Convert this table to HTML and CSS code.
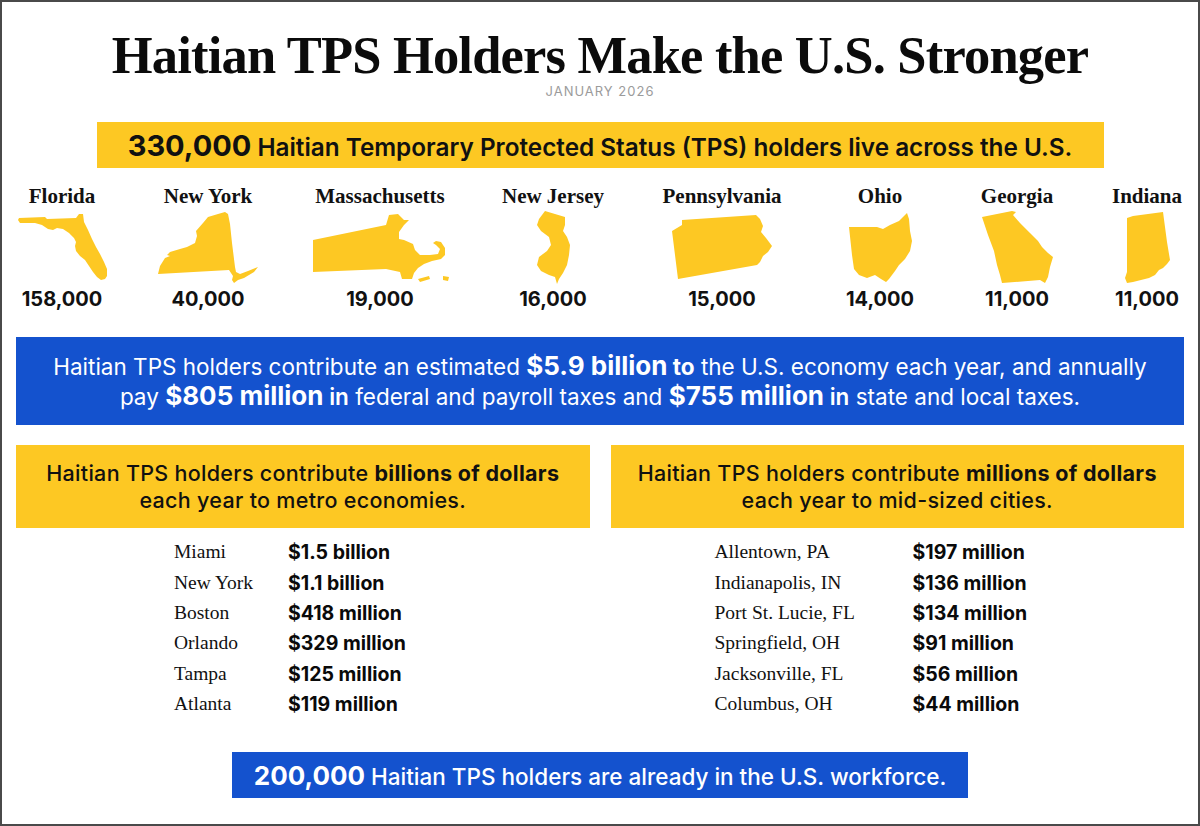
FILE: index.html
```html
<!DOCTYPE html>
<html>
<head>
<meta charset="utf-8">
<title>Haitian TPS Holders Make the U.S. Stronger</title>
<link rel="stylesheet" href="styles.css">
</head>
<body>
<div class="page">
  <h1 class="title">Haitian TPS Holders Make the U.S. Stronger</h1>
  <div class="date">JANUARY 2026</div>
  <div class="banner"><span><b class="big">330,000</b> Haitian Temporary Protected Status (TPS) holders live across the U.S.</span></div>

  <div class="states">
    <div class="state">
      <div class="name">Florida</div>
      <div class="shape"><svg width="89" height="66" viewBox="0 0 89 66"><path d="M1,4 L27,3 L29,5 L58,4 L61,0 L65,0 L66,8 L70,16 L74,25 L78,33 L82,40 L86,48 L89,55 L89,62 L87,65 L83,66 L79,63 L75,58 L71,52 L67,46 L62,42 L58,37 L57,32 L58,28 L56,24 L51,19 L45,15 L39,14 L35,16 L30,15 L24,11 L17,9 L8,9 L2,9 L0,6 Z"/></svg></div>
      <div class="num">158,000</div>
    </div>
    <div class="state">
      <div class="name">New York</div>
      <div class="shape"><svg width="100" height="71" viewBox="0 0 100 71"><path d="M0,62 L2,54 L7,46 L12,44 L9,43 L12,40 L22,37 L29,35 L37,31 L39,24 L38,19 L45,11 L50,5 L60,2 L67,0 L70,2 L72,12 L74,31 L77,55 L78,60 L82,62 L90,59 L100,55 L96,60 L86,66 L80,68 L76,71 L74,68 L75,64 L71,58 L0,62 Z"/></svg></div>
      <div class="num">40,000</div>
    </div>
    <div class="state">
      <div class="name">Massachusetts</div>
      <div class="shape"><svg width="137" height="70" viewBox="0 0 137 70"><path d="M1,28 L74,13 L77,3 L86,2 L92,8 L97,8 L92,13 L87,20 L87,27 L92,28 L101,32 L103,38 L108,43 L118,43 L126,42 L128,37 L124,33 L121,31 L124,29 L129,30 L133,36 L133,43 L129,47 L120,49 L112,52 L106,56 L102,61 L100,67 L90,67 L88,60 L74,57 L1,60 Z M106,67 L117,64 L118,67 L108,70 Z M131,64 L137,65 L136,69 L131,68 Z"/></svg></div>
      <div class="num">19,000</div>
    </div>
    <div class="state">
      <div class="name">New Jersey</div>
      <div class="shape"><svg width="33" height="73" viewBox="0 0 33 73"><path d="M8,0 L28,6 L28,14 L26,20 L30,26 L33,34 L32,44 L30,54 L26,62 L22,68 L20,73 L18,66 L12,64 L4,60 L0,54 L2,46 L10,40 L14,34 L12,26 L4,20 L0,14 L2,8 Z"/></svg></div>
      <div class="num">16,000</div>
    </div>
    <div class="state">
      <div class="name">Pennsylvania</div>
      <div class="shape"><svg width="100" height="64" viewBox="0 0 100 64"><path d="M0,16 L10,10 L10,5 L84,0 L88,4 L91,11 L89,17 L94,23 L100,31 L96,37 L91,41 L88,47 L85,50 L6,64 Z"/></svg></div>
      <div class="num">15,000</div>
    </div>
    <div class="state">
      <div class="name">Ohio</div>
      <div class="shape"><svg width="63" height="69" viewBox="0 0 63 69"><path d="M0,14 L28,14 L34,16 L41,12 L50,8 L58,0 L60,6 L61,18 L63,28 L61,38 L56,46 L50,52 L46,58 L40,66 L37,69 L32,66 L26,62 L18,65 L10,62 L5,56 L3,42 Z"/></svg></div>
      <div class="num">14,000</div>
    </div>
    <div class="state">
      <div class="name">Georgia</div>
      <div class="shape"><svg width="71" height="72" viewBox="0 0 71 72"><path d="M0,6 L30,0 L34,1 L31,4 L38,12 L48,22 L56,30 L60,36 L66,42 L71,46 L68,56 L66,66 L63,72 L58,69 L20,72 L18,64 L15,54 L12,40 L6,24 Z"/></svg></div>
      <div class="num">11,000</div>
    </div>
    <div class="state">
      <div class="name">Indiana</div>
      <div class="shape"><svg width="45" height="71" viewBox="0 0 45 71"><path d="M2,6 L8,4 L38,0 L42,30 L45,48 L42,52 L38,56 L34,58 L30,63 L24,66 L16,68 L8,70 L2,71 L0,66 L2,60 Z"/></svg></div>
      <div class="num">11,000</div>
    </div>
  </div>

  <div class="blue">
    <p class="blue-text">Haitian TPS holders contribute an estimated <b class="bigb">$5.9 billion</b><b> to</b> the U.S. economy each year, and annually<br>pay <b class="bigb">$805 million</b><b class="mid"> in</b> federal and payroll taxes and <b class="bigb">$755 million</b><b class="mid"> in</b> state and local taxes.</p>
  </div>

  <div class="cols">
    <div class="col">
      <div class="ybox"><p>Haitian TPS holders contribute <b>billions of dollars</b><br>each year to metro economies.</p></div>
      <div class="list list-left">
        <span class="city">Miami</span><span class="amt">$1.5 billion</span>
        <span class="city">New York</span><span class="amt">$1.1 billion</span>
        <span class="city">Boston</span><span class="amt">$418 million</span>
        <span class="city">Orlando</span><span class="amt">$329 million</span>
        <span class="city">Tampa</span><span class="amt">$125 million</span>
        <span class="city">Atlanta</span><span class="amt">$119 million</span>
      </div>
    </div>
    <div class="col">
      <div class="ybox"><p>Haitian TPS holders contribute <b>millions of dollars</b><br>each year to mid-sized cities.</p></div>
      <div class="list list-right">
        <span class="city">Allentown, PA</span><span class="amt">$197 million</span>
        <span class="city">Indianapolis, IN</span><span class="amt">$136 million</span>
        <span class="city">Port St. Lucie, FL</span><span class="amt">$134 million</span>
        <span class="city">Springfield, OH</span><span class="amt">$91 million</span>
        <span class="city">Jacksonville, FL</span><span class="amt">$56 million</span>
        <span class="city">Columbus, OH</span><span class="amt">$44 million</span>
      </div>
    </div>
  </div>

  <div class="foot"><span><b class="big2">200,000</b> Haitian TPS holders are already in the U.S. workforce.</span></div>
</div>
</body>
</html>
```

FILE: styles.css
```css
html, body {
  margin: 0;
  padding: 0;
  background: #ffffff;
}

.page {
  width: 1200px;
  height: 826px;
  box-sizing: border-box;
  border: 2px solid #4a4a4a;
  padding: 25px 14px 0;
  font-family: Inter, "Liberation Sans", sans-serif;
  color: #111111;
  overflow: hidden;
}

.title {
  margin: 0;
  font-family: "Liberation Serif", serif;
  font-weight: 700;
  font-size: 52.5px;
  line-height: 56px;
  letter-spacing: -0.8px;
  text-align: center;
  color: #0b0b0b;
}

.date {
  text-align: center;
  font-size: 13px;
  line-height: 17px;
  color: #9b9b9b;
  letter-spacing: 1px;
}

.banner {
  width: 1007px;
  height: 46px;
  margin: 22px auto 0;
  background: #fdc823;
  display: flex;
  align-items: center;
  justify-content: center;
  font-size: 24.3px;
  font-weight: 600;
  color: #111;
  white-space: nowrap;
}

.big {
  font-size: 29px;
  font-weight: 700;
}

.states {
  display: grid;
  grid-template-columns: 92px 124px 144px 126px 136px 104px 94px 90px;
  column-gap: 38px;
  margin-top: 17px;
}

.state {
  display: flex;
  flex-direction: column;
  align-items: center;
}

.name {
  font-family: "Liberation Serif", serif;
  font-weight: 700;
  font-size: 21px;
  line-height: 22px;
  white-space: nowrap;
}

.shape {
  height: 72px;
  margin-top: 4px;
  display: flex;
  align-items: center;
}

.shape svg {
  display: block;
  fill: #fdc823;
}

.num {
  font-size: 20px;
  font-weight: 700;
  line-height: 24px;
  margin-top: 4px;
}

.blue {
  margin-top: 26px;
  height: 88px;
  background: #1452ce;
  color: #ffffff;
  display: flex;
  align-items: center;
  justify-content: center;
}

.blue-text {
  margin: 0;
  text-align: center;
  font-size: 22.5px;
  line-height: 29px;
  white-space: nowrap;
}

.bigb {
  font-size: 26px;
  font-weight: 700;
}

.mid {
  font-weight: 600;
}

.cols {
  display: flex;
  gap: 21px;
  margin-top: 20px;
}

.col {
  flex: 1;
}

.ybox {
  height: 83px;
  background: #fdc823;
  display: flex;
  align-items: center;
  justify-content: center;
}

.ybox p {
  margin: 0;
  text-align: center;
  font-size: 21.5px;
  line-height: 27px;
  letter-spacing: 0.3px;
  font-weight: 500;
}

.ybox b {
  font-weight: 700;
}

.list {
  display: grid;
  grid-auto-rows: 30.4px;
  align-items: center;
  margin-top: 9px;
}

.list-left {
  grid-template-columns: 114px auto;
  padding-left: 158px;
}

.list-right {
  grid-template-columns: 198px auto;
  padding-left: 104px;
}

.city {
  font-family: "Liberation Serif", serif;
  font-size: 19.5px;
  color: #111;
}

.amt {
  font-size: 19.5px;
  font-weight: 700;
  color: #0a0a0a;
}

.foot {
  width: 736px;
  height: 46px;
  margin: 33px auto 0;
  background: #1452ce;
  color: #fff;
  display: flex;
  align-items: center;
  justify-content: center;
  font-size: 22.5px;
  font-weight: 500;
  white-space: nowrap;
}

.big2 {
  font-size: 26px;
  font-weight: 700;
}
```
